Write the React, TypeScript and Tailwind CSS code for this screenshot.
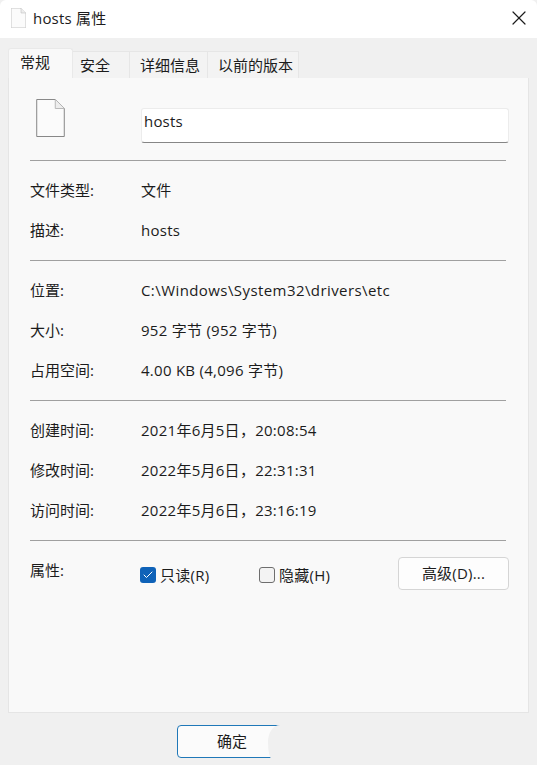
import { Check, X } from "lucide-react";

const font = "font-['Open_Sans','Noto_Sans_CJK_SC',sans-serif]";

const FileIcon = ({ className, stroke }: { className: string; stroke: string }) => (
  <svg viewBox="0 0 30 40" fill="none" className={className}>
    <path d="M0.5 0.5H20L29.5 10V39.5H0.5Z" fill="#fbfbfb" stroke={stroke} />
    <path d="M20 0.5V10H29.5" fill="#ededed" stroke="#b5b5b5" />
  </svg>
);

const Separator = () => <div className="ml-[21px] w-[476px] h-px bg-[#a0a0a0]" />;

const Row = ({ label, value }: { label: string; value: string }) => (
  <div className="flex h-10 items-center pl-[21px]">
    <div className="w-[111px]">{label}</div>
    <div className={value.startsWith("C:") ? "tracking-[0.42px]" : "tracking-[0.27px]"}>{value}</div>
  </div>
);

const Section = ({ rows }: { rows: [string, string][] }) => (
  <div className="pt-[9px] pb-[10px]">
    {rows.map(([label, value]) => (
      <Row key={label} label={label} value={value} />
    ))}
  </div>
);

const tabs = [
  { label: "安全", className: "w-[57px] pl-[7px]" },
  { label: "详细信息", className: "w-[78px] pl-[10px]" },
  { label: "以前的版本", className: "w-[91px] pl-[10px]" },
];

export default function App() {
  return (
    <div className={`${font} w-[537px] h-[765px] overflow-hidden bg-[#f0f0f0] text-[15px] text-[#1c1c1c]`}>
      {/* title bar */}
      <div className="flex h-[38px] items-center rounded-t-[6px] bg-white pb-[2px] pl-[11px] pr-[6px]">
        <FileIcon className="h-[20px] w-[15px]" stroke="#b0b0b0" />
        <span className="ml-[7px] tracking-[0.2px]">hosts 属性</span>
        <X className="ml-auto h-6 w-6" strokeWidth={1.2} />
      </div>

      {/* tabs */}
      <div className="flex h-[40px] items-end pl-[8px]">
        <div className="flex h-[30px] w-[65px] items-center rounded-t-[3px] border border-b-0 border-[#e9e9e9] bg-[#f9f9f9] pb-[2px] pl-[11px]">
          常规
        </div>
        {tabs.map((tab) => (
          <div
            key={tab.label}
            className={`${tab.className} flex h-[27px] items-center border border-b-0 border-l-0 border-[#e6e6e6] bg-[#f3f3f3]`}
          >
            {tab.label}
          </div>
        ))}
      </div>

      {/* panel */}
      <div className="ml-[8px] h-[635px] w-[521px] border border-t-0 border-[#e5e5e5] bg-[#f9f9f9]">
        <div className="flex h-[82px] items-start pl-[27px] pt-[21px]">
          <FileIcon className="h-[38px] w-[29px]" stroke="#7f7f7f" />
          <div className="ml-[76px] mt-[9px] flex h-[35px] w-[368px] items-start rounded-[3px] border border-[#ececec] border-b-[#868686] bg-white pl-[2px] pt-[1px] tracking-[0.2px]">
            hosts
          </div>
        </div>
        <Separator />
        <Section rows={[["文件类型:", "文件"], ["描述:", "hosts"]]} />
        <Separator />
        <Section
          rows={[
            ["位置:", "C:\\Windows\\System32\\drivers\\etc"],
            ["大小:", "952 字节 (952 字节)"],
            ["占用空间:", "4.00 KB (4,096 字节)"],
          ]}
        />
        <Separator />
        <Section
          rows={[
            ["创建时间:", "2021年6月5日，20:08:54"],
            ["修改时间:", "2022年5月6日，22:31:31"],
            ["访问时间:", "2022年5月6日，23:16:19"],
          ]}
        />
        <Separator />
        <div className="flex items-start pl-[21px] pt-[16px]">
          <div className="w-[110px] pt-[2px]">属性:</div>
          <div className="flex w-[119px] items-center pt-[10px] leading-[16px]">
            <span className="flex h-4 w-4 items-center justify-center rounded-[3px] bg-[#0f62b8]">
              <Check className="h-3 w-3 text-white" strokeWidth={2} />
            </span>
            <span className="ml-[4px] tracking-[0.27px]">只读(R)</span>
          </div>
          <div className="flex w-[139px] items-center pt-[10px] leading-[16px]">
            <span className="h-4 w-4 rounded-[3px] border border-[#6e6e6e] bg-[#f3f3f3]" />
            <span className="ml-[4px] tracking-[0.27px]">隐藏(H)</span>
          </div>
          <div className="flex h-[33px] w-[111px] items-center justify-center rounded-[4px] border border-[#d5d5d5] bg-[#fdfdfd] pb-[1px] tracking-[0.2px]">
            高级(D)...
          </div>
        </div>
      </div>

      {/* footer */}
      <div className="relative pl-[177px] pt-[12px]">
        <div className="flex h-[33px] w-[110px] items-center justify-center rounded-[4px] border border-[#1f78b8] bg-[#fbfbfb]">
          确定
        </div>
        <div className="absolute left-[268px] top-[12px] h-[34px] w-[40px] rounded-tl-[12px_17px] rounded-bl-[4px_17px] bg-[#f0f0f0]" />
      </div>
    </div>
  );
}
